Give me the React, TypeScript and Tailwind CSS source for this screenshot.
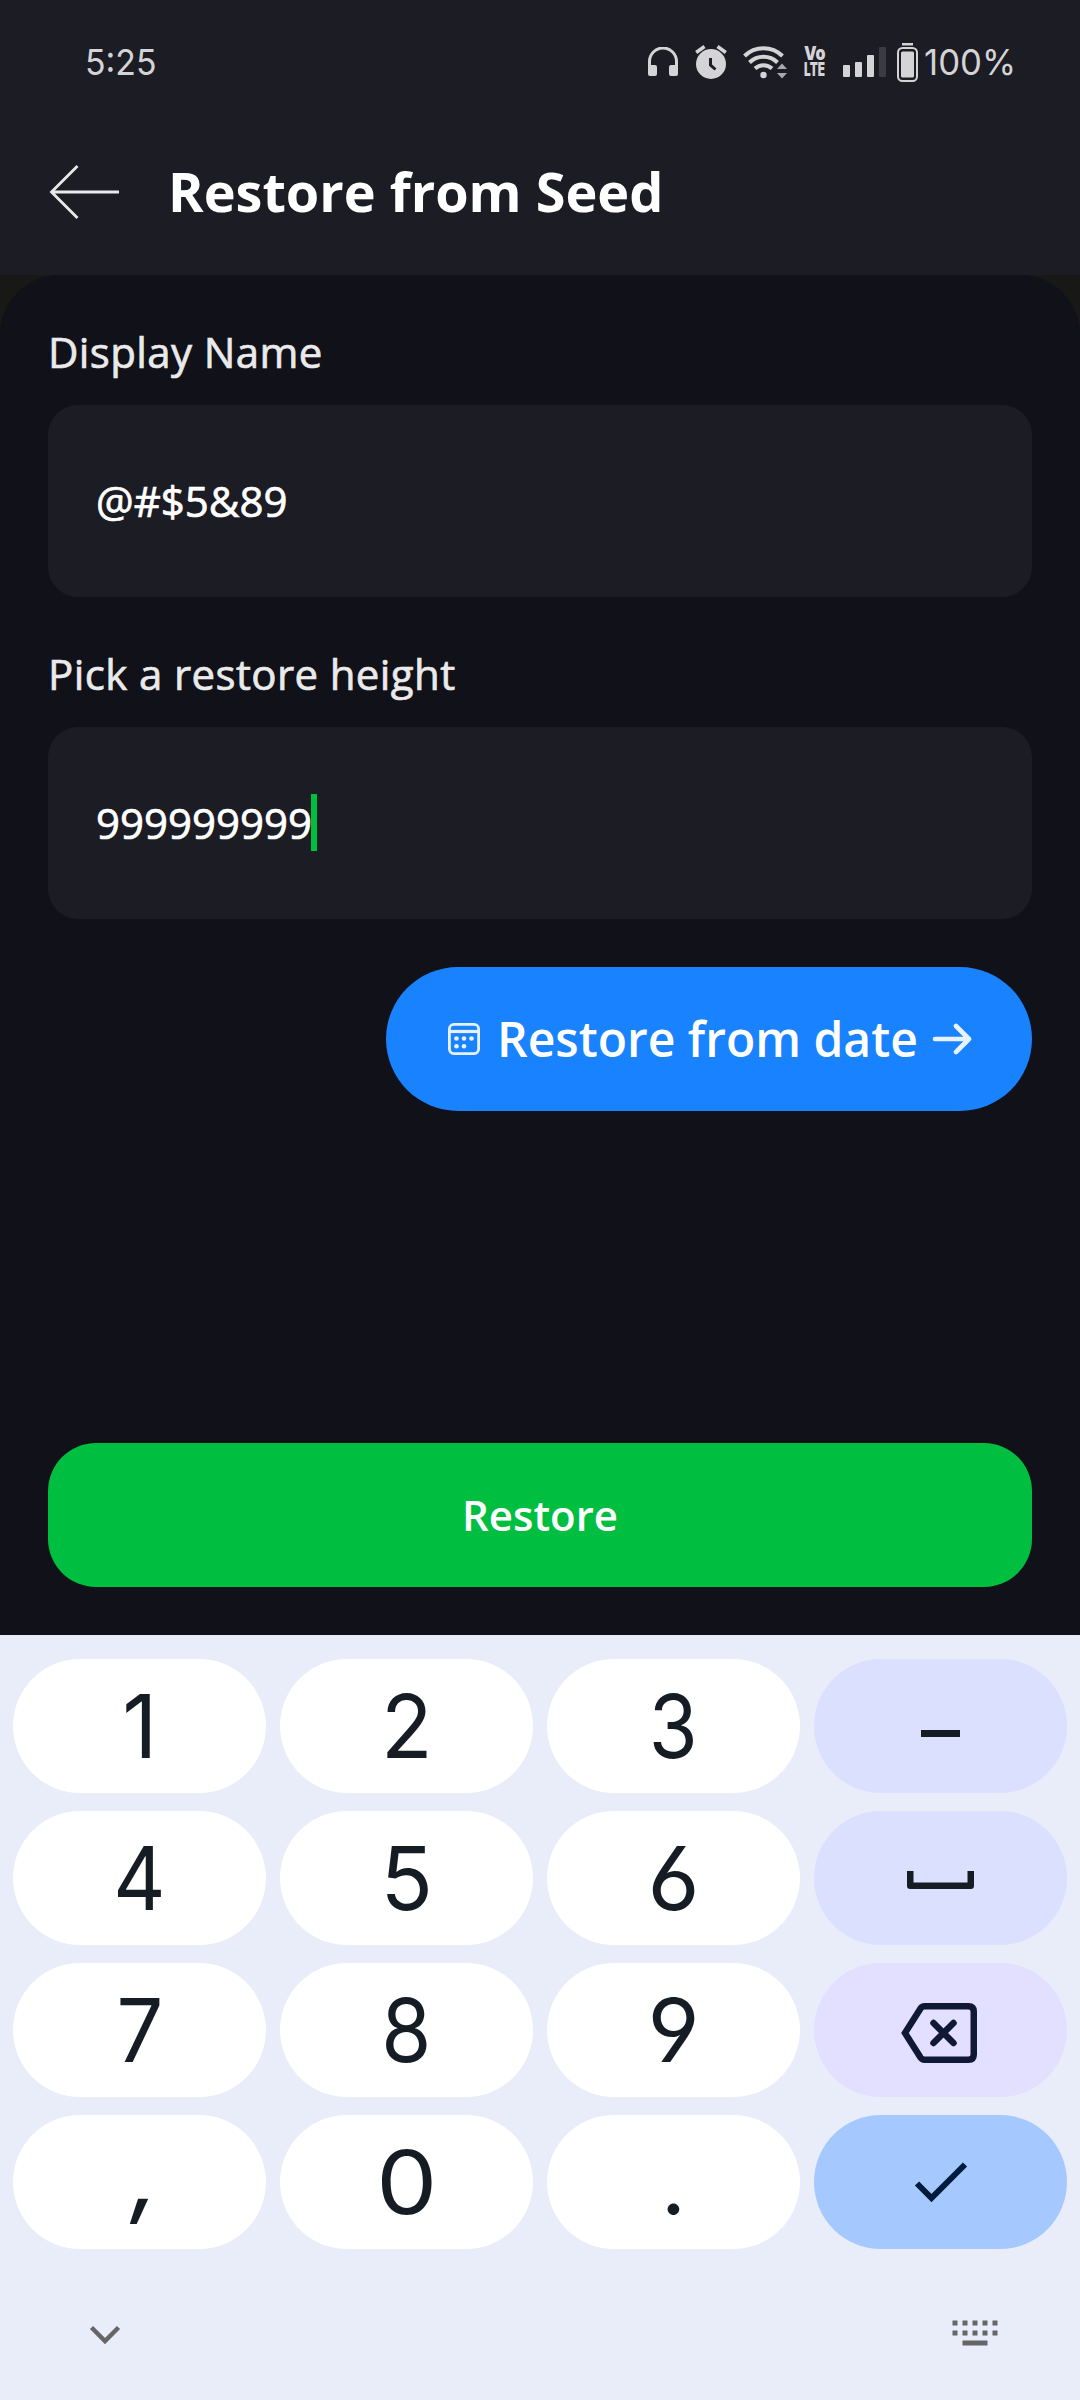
import type { ReactNode } from "react";

function StatusBar() {
  return (
    <div className="flex h-[124px] items-center justify-between pl-[85px] pr-[65px] font-[Inter,sans-serif] text-[36px] text-[#d4d4d6]">
      <span className="inline-block origin-left scale-x-[0.94] leading-none">5:25</span>
      <div className="flex items-center">
        <svg className="h-[30px] w-[30px]" viewBox="0 0 30 30" fill="none">
          <path d="M1.5 23V14.5a13.5 13.5 0 0 1 27 0V23" stroke="currentColor" strokeWidth="3" />
          <path d="M0 18h7q2 0 2 2v7q0 2-2 2H2q-2 0-2-2zM30 18h-7q-2 0-2 2v7q0 2 2 2h5q2 0 2-2z" fill="currentColor" />
        </svg>
        <svg className="ml-[17px] h-[34px] w-[32px]" viewBox="0 0 32 34" fill="none">
          <circle cx="16" cy="19" r="15" fill="currentColor" />
          <path d="M1.2 7.5 9.5 1.5M30.800 7.500 22.500 1.500" stroke="currentColor" strokeWidth="3.500" />
          <path d="M15.500 13v7l5 4.500" stroke="#1d1d25" strokeWidth="3" />
        </svg>
        <svg className="ml-[16px] h-[36px] w-[44px]" viewBox="0 0 44 36" fill="none" stroke="currentColor" strokeWidth="4">
          <path d="M1.500 12a27 27 0 0 1 38 0M6.500 18.500a20 20 0 0 1 28 0M12 24.500a12.500 12.500 0 0 1 17 0" />
          <circle cx="20.500" cy="31" r="3.200" fill="currentColor" stroke="none" />
          <path d="M34 25h10l-5-5.500zM34 29h10l-5 5.500z" fill="#a9a9ad" stroke="none" />
        </svg>
        <div className="ml-[17px] flex h-[32px] w-[22px] flex-col text-[19px] font-black leading-[16px]">
          <span className="inline-block w-fit origin-left scale-x-[0.84]">Vo</span>
          <span className="inline-block w-fit origin-left scale-x-[0.62]">LTE</span>
        </div>
        <div className="ml-[17px] flex h-[30px] items-end gap-[5px]">
          <span className="h-[12px] w-[7px] rounded-[1px] bg-[#d4d4d6]" />
          <span className="h-[15px] w-[7px] rounded-[1px] bg-[#d4d4d6]" />
          <span className="h-[22px] w-[7px] rounded-[1px] bg-[#d4d4d6]" />
          <span className="h-[30px] w-[7px] rounded-[1px] bg-[#3b3b43]" />
        </div>
        <svg className="ml-[11px] h-[39px] w-[21px]" viewBox="0 0 21 39" fill="none">
          <rect x="5" y="0" width="11" height="2.500" fill="currentColor" />
          <rect x="1" y="5" width="19" height="33" rx="4.500" stroke="currentColor" strokeWidth="2" />
          <rect x="4" y="8.500" width="13" height="26" rx="1.500" fill="currentColor" />
        </svg>
        <span className="ml-[6px] w-[91px] leading-none">
          <span className="inline-block origin-left scale-x-[0.965]">100%</span>
        </span>
      </div>
    </div>
  );
}

function Field({ label, value, focused = false }: { label: string; value: string; focused?: boolean }) {
  return (
    <div className="[-webkit-text-stroke:0.7px_currentColor]">
      <label className="block h-[82px] text-[42px] leading-[58px] tracking-[0.39px] text-[#eaeaea]">{label}</label>
      <div className="flex h-[192px] items-center rounded-[30px] bg-[#1c1c24] px-[48px] pb-[2px] text-[42px] leading-[57px] text-white">
        <span className="whitespace-nowrap">{value}</span>
        {focused && <span className="-ml-px h-[57px] w-[6px] bg-[#00bf40]" />}
      </div>
    </div>
  );
}

const keyGlyphs: Record<string, string> = {
  "1": "scale-x-[0.98]",
  "2": "scale-x-[0.96]",
  "3": "scale-x-[0.9]",
  "4": "scale-x-[0.92]",
  "5": "scale-x-[0.98]",
  "6": "scale-x-[1.02]",
  "7": "scale-x-[0.94]",
  "8": "scale-x-[0.92]",
  "9": "scale-x-[1.02]",
  "0": "scale-x-[1.1]",
};

function Key({ tone = "bg-white", children }: { tone?: string; children: ReactNode }) {
  return <button className={`flex h-full w-full items-center justify-center rounded-[67px] ${tone}`}>{children}</button>;
}

function Digit({ d }: { d: string }) {
  return (
    <Key>
      <span className={`inline-block font-[Inter,sans-serif] text-[88px] leading-none text-[#161c23] [font-feature-settings:'cv03','cv04'] ${keyGlyphs[d]}`}>{d}</span>
    </Key>
  );
}

export default function App() {
  return (
    <div className="flex h-[2400px] w-[1080px] flex-col bg-[#181816] font-['Open_Sans',sans-serif]">
      <header className="h-[275px] bg-[#1c1c24]">
        <StatusBar />
        <div className="flex h-[136px] items-center pl-[49px]">
          <svg className="h-[56px] w-[71px]" viewBox="0 0 71 56" fill="none" stroke="#e9e9ea" strokeWidth="2.800">
            <path d="M70 28H3M28.500 2 2.500 28l26 26" />
          </svg>
          <h1 className="mb-[2px] ml-[48px] text-[54px] font-bold leading-none text-white">Restore from Seed</h1>
        </div>
      </header>

      <main className="flex h-[1360px] flex-col rounded-t-[60px] bg-[#111119] px-[48px] pt-[48px]">
        <Field label="Display Name" value="@#$5&89" />
        <div className="h-[48px]" />
        <Field label="Pick a restore height" value="999999999" focused />
        <button className="mt-[48px] flex h-[144px] w-[646px] shrink-0 items-center self-end rounded-full bg-[#1882ff] pl-[62px] text-white">
          <svg className="h-[32px] w-[32px]" viewBox="0 0 32 32" fill="none" stroke="#e8f2ff" strokeWidth="2.800">
            <rect x="1.400" y="1.400" width="29.200" height="29.200" rx="4.500" />
            <path d="M1 8.500h30" strokeWidth="3.200" />
            <g fill="#e8f2ff" stroke="none">
              <circle cx="8.500" cy="15.500" r="2.300" />
              <circle cx="16" cy="15.500" r="2.300" />
              <circle cx="23.500" cy="15.500" r="2.300" />
              <circle cx="8.500" cy="23.300" r="2.300" />
              <circle cx="16" cy="23.300" r="2.300" />
            </g>
          </svg>
          <span className="ml-[17px] w-[419px] whitespace-nowrap text-[48px] font-semibold leading-[66px]">Restore from date</span>
          <svg className="ml-[16px] h-[32px] w-[40px]" viewBox="0 0 40 32" fill="none" stroke="#e8f2ff" strokeWidth="4.600" strokeLinecap="round" strokeLinejoin="round">
            <path d="M3 16h34M24 3l13 13-13 13" />
          </svg>
        </button>
        <button className="mb-[48px] mt-auto h-[144px] shrink-0 rounded-[48px] bg-[#00bf40] pb-[2px] text-[42px] font-semibold text-white">Restore</button>
      </main>

      <section className="flex flex-1 flex-col bg-[#e9edfa]">
        <div className="mt-[24px] grid h-[590px] grid-cols-4 grid-rows-4 gap-x-[14px] gap-y-[18px] px-[13px]">
          <Digit d="1" />
          <Digit d="2" />
          <Digit d="3" />
          <Key tone="bg-[#dce0ff]">
            <span className="mt-[15px] h-[7px] w-[39px] bg-[#161c23]" />
          </Key>
          <Digit d="4" />
          <Digit d="5" />
          <Digit d="6" />
          <Key tone="bg-[#dce0ff]">
            <svg className="mt-[3px] h-[18px] w-[67px]" viewBox="0 0 67 18" fill="none" stroke="#161c23" strokeWidth="6.500" strokeLinejoin="round">
              <path d="M3.250 0v14.750h60.500V0" />
            </svg>
          </Key>
          <Digit d="7" />
          <Digit d="8" />
          <Digit d="9" />
          <Key tone="bg-[#e3dfff]">
            <svg className="mr-[4px] mt-[5px] h-[60px] w-[78px]" viewBox="0 0 78 60" fill="none" stroke="#0f1834" strokeWidth="6.500">
              <path d="M5 30 20.500 5.500Q22 3.250 24.500 3.250H68.500Q73.750 3.250 73.750 8.500V51.500Q73.750 56.750 68.500 56.750H24.500Q22 56.750 20.500 54.500Z" />
              <path d="m33.500 20 20 20m0-20-20 20" strokeLinecap="round" />
            </svg>
          </Key>
          <Key>
            <span className="mb-[12px] ml-[14px] inline-block -skew-x-[10deg] font-[Inter,sans-serif] text-[88px] font-medium leading-none text-[#161c23]">,</span>
          </Key>
          <Digit d="0" />
          <Key>
            <span className="inline-block font-[Inter,sans-serif] text-[88px] leading-none text-[#161c23]">.</span>
          </Key>
          <Key tone="bg-[#a5c8ff]">
            <svg className="h-[42px] w-[54px]" viewBox="0 0 54 42" fill="none" stroke="#001b3b" strokeWidth="6">
              <path d="M3 22.500 17.500 37 51 3.500" />
            </svg>
          </Key>
        </div>
        <div className="flex flex-1 items-center justify-between pl-[89px] pr-[81px] pt-[17px]">
          <svg className="mt-[3px] h-[20px] w-[32px]" viewBox="0 0 32 20" fill="none" stroke="#666" strokeWidth="4.500">
            <path d="m2.500 2.500 13.500 13.500 13.500-13.500" />
          </svg>
          <svg className="h-[27px] w-[47px]" viewBox="0 0 47 27" fill="#666">
            {[0, 10, 20, 30, 40].map((x) => (
              <g key={x}>
                <rect x={x + 0.500} y="0.500" width="5" height="5" />
                <rect x={x + 0.500} y="10.500" width="5" height="5" />
              </g>
            ))}
            <rect x="10.500" y="20.500" width="25" height="5" />
          </svg>
        </div>
      </section>
    </div>
  );
}
